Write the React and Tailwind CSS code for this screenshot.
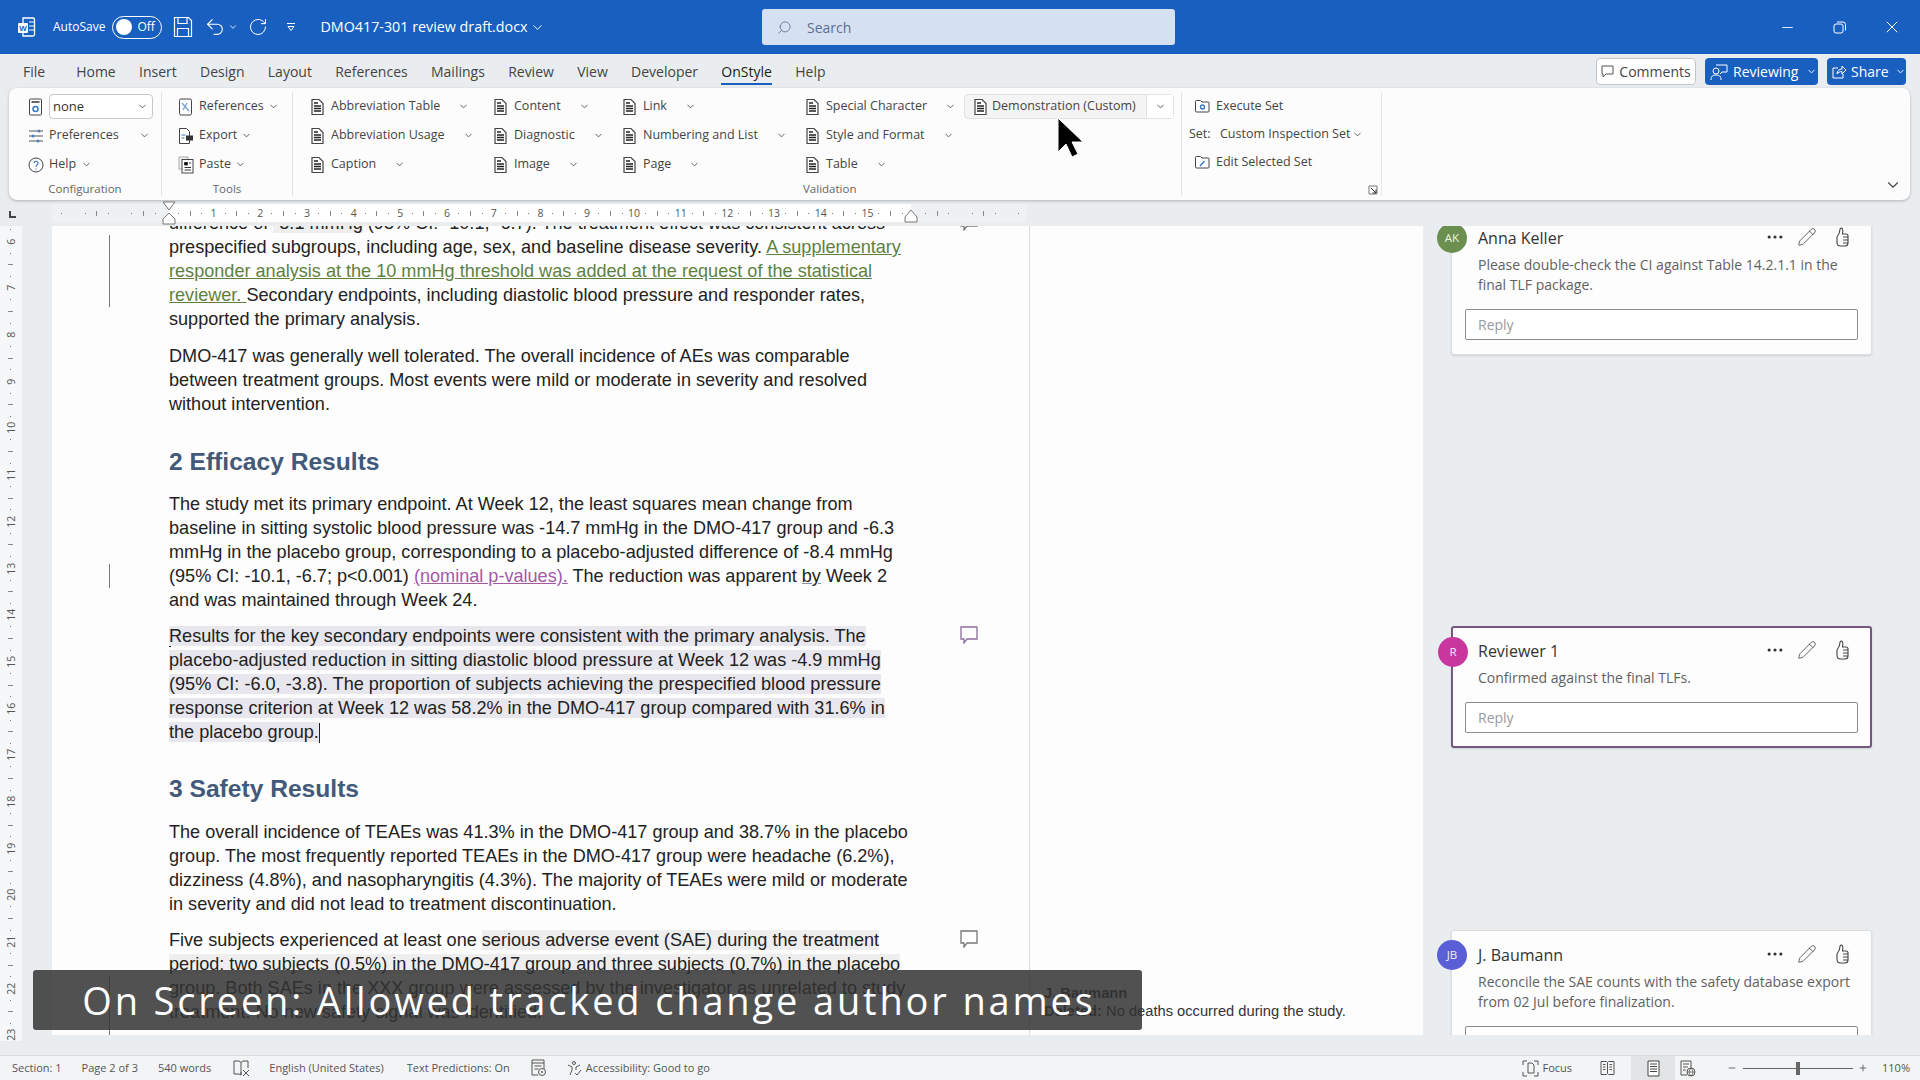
import { ChevronDown, Ellipsis, Minus, Pencil, Plus, RotateCw, Search, Undo2, X } from "lucide-react";

const Chev = ({ className = "" }) => (
  <ChevronDown size={11} strokeWidth={2} className={`text-[#555] shrink-0 ${className}`} />
);

const DocIcon = () => (
  <svg width="15" height="18" viewBox="0 0 15 18" className="shrink-0">
    <path d="M2 1.500h7l4 4v11H2z" fill="#fff" stroke="#444" strokeWidth="1.200" />
    <path d="M4 5h4M4 8h7M4 10.500h7M4 13h7" stroke="#222" strokeWidth="1.300" />
  </svg>
);

const SliderIcon = () => (
  <svg width="16" height="16" viewBox="0 0 16 16" className="shrink-0">
    <path d="M1 3h14M1 8h14M1 13h14" stroke="#555" strokeWidth="1" />
    <circle cx="11" cy="3" r="1.500" fill="#4a7fc0" />
    <circle cx="5" cy="8" r="1.500" fill="#4a7fc0" />
    <circle cx="10" cy="13" r="1.500" fill="#4a7fc0" />
  </svg>
);

const HelpIcon = () => (
  <svg width="16" height="16" viewBox="0 0 16 16" className="shrink-0">
    <circle cx="8" cy="8" r="7" fill="#fff" stroke="#444" />
    <path d="M6 6.200a2 2 0 1 1 3 1.800c-.7.400-1 .8-1 1.700M8 11.500v1" fill="none" stroke="#3b78c4" strokeWidth="1.200" />
  </svg>
);

const FolderIcon = ({ mark }) => (
  <svg width="17" height="16" viewBox="0 0 17 16" className="shrink-0">
    <path d="M1.500 3.500a1 1 0 0 1 1-1h4l1.500 1.500h6a1 1 0 0 1 1 1v8a1 1 0 0 1-1 1h-11.500a1 1 0 0 1-1-1z" fill="#fff" stroke="#444" />
    {mark === "gear" ? (
      <circle cx="8.500" cy="9" r="2" fill="none" stroke="#3b78c4" strokeWidth="1.400" />
    ) : (
      <path d="M6 12l4.500-5" stroke="#3b78c4" strokeWidth="1.400" />
    )}
  </svg>
);

const ConfigIcon = () => (
  <svg width="15" height="18" viewBox="0 0 15 18" className="shrink-0">
    <rect x="1.500" y="1" width="12" height="16" rx="1" fill="#fff" stroke="#444" />
    <path d="M3.500 4h8" stroke="#333" strokeWidth="1.500" />
    <circle cx="7.500" cy="11" r="2.500" fill="none" stroke="#3b78c4" strokeWidth="1.500" />
  </svg>
);

const RefIcon = () => (
  <svg width="15" height="18" viewBox="0 0 15 18" className="shrink-0">
    <rect x="1.500" y="1" width="12" height="16" rx="1.500" fill="#fff" stroke="#444" />
    <path d="M4 5l7 8M5 12l4-7" stroke="#7fa6d6" strokeWidth="1.500" />
  </svg>
);

const ExportIcon = () => (
  <svg width="17" height="18" viewBox="0 0 17 18" className="shrink-0">
    <path d="M1.500 1.500h7l3 3v12h-10z" fill="#fff" stroke="#444" />
    <path d="M3.500 8h4M3.500 11h3" stroke="#3b78c4" />
    <rect x="8" y="8.500" width="7" height="5" fill="#333" />
  </svg>
);

const PasteIcon = () => (
  <svg width="17" height="18" viewBox="0 0 17 18" className="shrink-0">
    <rect x="1" y="1" width="9" height="12" fill="#eef0f3" stroke="#aaa" />
    <rect x="4" y="3.500" width="11" height="13.500" fill="#fff" stroke="#444" />
    <path d="M6.500 6.500h3v2.500h-3zM11 7h2M6.500 11.500h6.500M6.500 14h6.500" stroke="#333" />
  </svg>
);

const ThumbIcon = () => (
  <svg width="18" height="20" viewBox="0 0 18 20" className="text-[#444] shrink-0">
    <path
      d="M5 10c1.500-2 3-4.500 3-7.500C8 1.300 9 .8 10 1.300c1.200.8.800 3.700.5 5.700H14c1.200 0 2 .8 2 2v7c0 2-1.300 3-3 3H8.500C6.500 19 5 17.500 5 15.500z"
      fill="none"
      stroke="currentColor"
      strokeWidth="1.100"
    />
    <path d="M11 10h5M11 13h5M11 16h5" stroke="currentColor" strokeWidth="1" />
  </svg>
);

function Item({ icon, label, gap = "ml-[18px]" }) {
  return (
    <div className="h-[29px] flex items-center">
      <span className="w-[21px] flex items-center shrink-0">{icon}</span>
      <span className="text-[12.500px] text-[#444] whitespace-nowrap">{label}</span>
      <Chev className={gap} />
    </div>
  );
}

function Validation({ width, items }) {
  return (
    <div className={`flex flex-col ${width}`}>
      {items.map((label) => (
        <Item key={label} icon={<DocIcon />} label={label} />
      ))}
    </div>
  );
}

function Ribbon() {
  return (
    <div className="relative h-[112px] ml-[9px] w-[1901px] rounded-lg bg-[#fcfcfc] shadow-[0_1px_3px_rgba(0,0,0,0.25)] flex pt-[4px] shrink-0">
      <div className="w-[153px] h-[104px] border-r border-[#e2e2e2] flex flex-col">
        <div className="pl-[19px] h-[87px]">
          <div className="h-[29px] flex items-center">
            <span className="w-[21px] shrink-0"><ConfigIcon /></span>
            <div className="w-[104px] h-[25px] border border-[#c8c8c8] rounded flex items-center justify-between px-[3px] bg-white">
              <span className="text-[13px] text-[#333]">none</span>
              <Chev className="mr-[1px]" />
            </div>
          </div>
          <Item icon={<SliderIcon />} label="Preferences" gap="ml-[20px]" />
          <Item icon={<HelpIcon />} label="Help" gap="ml-[5px]" />
        </div>
        <div className="text-center text-[11.500px] text-[#666] mt-[1px]">Configuration</div>
      </div>
      <div className="w-[131px] h-[104px] border-r border-[#e2e2e2] flex flex-col">
        <div className="pl-4 h-[87px]">
          <Item icon={<RefIcon />} label="References" gap="ml-[4px]" />
          <Item icon={<ExportIcon />} label="Export" gap="ml-[4px]" />
          <Item icon={<PasteIcon />} label="Paste" gap="ml-[4px]" />
        </div>
        <div className="text-center text-[11.500px] text-[#666] mt-[1px]">Tools</div>
      </div>
      <div className="w-[889px] h-[104px] border-r border-[#e2e2e2] flex flex-col">
        <div className="pl-[17px] h-[87px] flex">
          <Validation width="w-[183px]" items={["Abbreviation Table", "Abbreviation Usage", "Caption"]} />
          <Validation width="w-[129px]" items={["Content", "Diagnostic", "Image"]} />
          <Validation width="w-[183px]" items={["Link", "Numbering and List", "Page"]} />
          <Validation width="w-[159px]" items={["Special Character", "Style and Format", "Table"]} />
          <div className="h-[25px] w-[210px] mt-[2px] border border-[#e2e2e2] rounded bg-[#f4f4f4] flex items-center">
            <div className="flex-1 flex items-center pl-[8px] gap-[4px] border-r border-[#e2e2e2] h-full">
              <DocIcon />
              <span className="text-[12.500px] text-[#444] whitespace-nowrap">Demonstration (Custom)</span>
            </div>
            <span className="w-[26px] flex justify-center bg-white h-full items-center"><Chev /></span>
          </div>
        </div>
        <div className="ml-[510px] text-[11.500px] text-[#666] mt-[1px]">Validation</div>
      </div>
      <div className="w-[200px] h-[104px] border-r border-[#e8e8e8] pl-[7px] text-[12.500px] text-[#444]">
        <div className="h-[28px] flex items-center gap-[5px] pl-[5px]"><FolderIcon mark="gear" />Execute Set</div>
        <div className="h-[28px] flex items-center">
          <span className="w-[31px]">Set:</span>
          <span className="whitespace-nowrap">Custom Inspection Set</span>
          <Chev className="ml-[2px]" />
        </div>
        <div className="h-[28px] flex items-center gap-[5px] pl-[5px]"><FolderIcon />Edit Selected Set</div>
        <svg width="10" height="10" viewBox="0 0 10 10" className="absolute left-[1359px] top-[97px]">
          <path d="M1 1h8v8H1z" fill="none" stroke="#777" />
          <path d="M3 3l5 5M8 4.500v3.500h-3.500" stroke="#333" fill="none" />
        </svg>
      </div>
      <ChevronDown size={18} strokeWidth={1.500} className="absolute right-[8px] bottom-[6px] text-[#444]" />
    </div>
  );
}

function TitleBar() {
  return (
    <div className="h-[54px] bg-[#185fc0] flex items-center text-white relative shrink-0">
      <svg width="20" height="22" viewBox="0 0 20 22" className="ml-[17px]">
        <path d="M6 2h10a1.500 1.500 0 0 1 1.500 1.500v15a1.500 1.500 0 0 1-1.500 1.500H6z" fill="none" stroke="#fff" strokeWidth="1.300" />
        <path d="M12 6h5M12 10h5M12 14h5" stroke="#fff" />
        <rect x="1" y="7" width="10" height="10" rx="1" fill="#fff" />
        <text x="6" y="15" textAnchor="middle" fontSize="8" fontWeight="bold" fill="#185fc0" fontFamily="Liberation Sans">W</text>
      </svg>
      <span className="ml-[16px] text-[12px]">AutoSave</span>
      <div className="ml-[7px] w-[50px] h-[23px] rounded-full border border-white flex items-center pl-[3px] gap-[5px]">
        <span className="w-[16px] h-[16px] rounded-full bg-white" />
        <span className="text-[12px]">Off</span>
      </div>
      <svg width="20" height="22" viewBox="0 0 20 22" className="ml-[11px]">
        <path d="M1.500 1.500h14l3 3v16h-17z" fill="none" stroke="#fff" strokeWidth="1.200" />
        <path d="M5 1.500v6h9v-6M4.500 20.500v-8h11v8" fill="none" stroke="#fff" strokeWidth="1.200" />
      </svg>
      <Undo2 size={22} strokeWidth={1.200} className="ml-[11px]" />
      <ChevronDown size={10} strokeWidth={2} className="ml-[2px]" />
      <RotateCw size={20} strokeWidth={1.200} className="ml-[10px]" />
      <svg width="10" height="10" viewBox="0 0 10 10" className="ml-[18px]">
        <path d="M1 1.500h8M2 4.500h6l-3 4z" fill="none" stroke="#fff" />
      </svg>
      <span className="ml-[24px] text-[14.300px] whitespace-nowrap">DMO417-301 review draft.docx</span>
      <ChevronDown size={15} strokeWidth={1.500} className="ml-[3px]" />
      <div className="absolute left-[762px] top-[9px] w-[413px] h-[36px] rounded-[3px] bg-[#d5e1f2] flex items-center text-[#5d6f8a]">
        <Search size={15} strokeWidth={1.300} className="ml-[15px] -scale-x-100" />
        <span className="ml-[15px] text-[14px]">Search</span>
      </div>
      <div className="ml-auto flex items-center">
        <Minus size={17} strokeWidth={1.200} className="mr-[37px]" />
        <svg width="13" height="13" viewBox="0 0 13 13" className="mr-[36px]">
          <rect x="1" y="3" width="9" height="9" rx="2" fill="none" stroke="#fff" />
          <path d="M4 1h6a2.500 2.500 0 0 1 2.500 2.500v6" fill="none" stroke="#fff" />
        </svg>
        <X size={20} strokeWidth={1.200} className="mr-[18px]" />
      </div>
    </div>
  );
}

function Tabs() {
  const tabs = ["Home", "Insert", "Design", "Layout", "References", "Mailings", "Review", "View", "Developer"];
  return (
    <div className="h-[34px] flex items-center relative shrink-0 text-[14px] text-[#444]">
      <span className="ml-[23px] mr-[31px]">File</span>
      <div className="flex items-center gap-[23.300px]">
        {tabs.map((t) => (
          <span key={t}>{t}</span>
        ))}
        <span className="relative text-[#222]">
          OnStyle
          <span className="absolute left-0 right-0 -bottom-[3px] h-[2px] bg-[#185fc0]" />
        </span>
        <span>Help</span>
      </div>
      <div className="ml-auto flex items-center mr-[14px] h-[27px] mt-[1px] text-[14px]">
        <div className="w-[100px] h-full rounded border border-[#c4c4c4] bg-white flex items-center justify-center gap-[5px]">
          <svg width="13" height="13" viewBox="0 0 13 13">
            <path d="M1 1h11v8H5l-3 3V9H1z" fill="none" stroke="#555" />
          </svg>
          Comments
        </div>
        <div className="ml-[9px] w-[113px] h-full rounded bg-[#185fc0] text-white flex items-center pl-[5px]">
          <svg width="18" height="18" viewBox="0 0 18 18">
            <circle cx="6" cy="8" r="3" fill="none" stroke="#fff" />
            <path d="M1 17c0-4 2-5 5-5s5 1 5 5M6 2h11v7h-5l-2 2" fill="none" stroke="#fff" />
          </svg>
          <span className="ml-[5px]">Reviewing</span>
          <ChevronDown size={11} strokeWidth={2} className="ml-[8px]" />
        </div>
        <div className="ml-[9px] w-[79px] h-full rounded bg-[#185fc0] text-white flex items-center pl-[5px]">
          <svg width="14" height="14" viewBox="0 0 14 14">
            <path d="M6 3H1v10h10V9M5 9c0-3 2-5 5-5V1l4 4-4 4V6.500c-2 0-4 1-5 2.500z" fill="none" stroke="#fff" />
          </svg>
          <span className="ml-[5px]">Share</span>
          <ChevronDown size={11} strokeWidth={2} className="ml-[6px]" />
        </div>
      </div>
    </div>
  );
}

function RulerCell({ n }) {
  const label = n >= 1 && n <= 15 ? n : "";
  return (
    <div className="w-[46.700px] shrink-0 flex items-center text-[10.500px] text-[#555]">
      <span className="w-[11.700px] text-center leading-none">{label}</span>
      <span className="w-[11.700px] flex justify-center"><span className="w-[1px] h-[1px] bg-[#777]" /></span>
      <span className="w-[11.700px] flex justify-center"><span className="w-[1px] h-[5px] bg-[#888]" /></span>
      <span className="w-[11.700px] flex justify-center"><span className="w-[1px] h-[1px] bg-[#777]" /></span>
    </div>
  );
}

function TopRuler() {
  const cells = [];
  for (let n = -3; n <= 18; n++) cells.push(n);
  return (
    <div className="h-[26px] flex shrink-0 pt-[4px] relative">
      <svg width="7" height="7" viewBox="0 0 7 7" className="absolute left-[9px] top-[11px]">
        <path d="M1 0v6h6" fill="none" stroke="#444" strokeWidth="2" />
      </svg>
      <div className="ml-[52px] w-[975px] h-[18px] bg-[#eef0f2] overflow-hidden relative">
        <div className="absolute left-[117px] top-0 w-[742px] h-full bg-white" />
        <div className="flex h-full -ml-[31px] relative">
          {cells.map((n) => (
            <RulerCell key={n} n={n} />
          ))}
        </div>
      </div>
      <svg width="14" height="24" viewBox="0 0 14 24" className="absolute left-[162px] top-[1px]">
        <path d="M1 1h12L7 9z" fill="#fff" stroke="#777" />
        <path d="M7 12l6 6v5H1v-5z" fill="#fff" stroke="#777" />
      </svg>
      <svg width="14" height="14" viewBox="0 0 14 14" className="absolute left-[904px] top-[9px]">
        <path d="M7 1l6 7v5H1V8z" fill="#fff" stroke="#777" />
      </svg>
    </div>
  );
}

function SideRuler() {
  const cells = [];
  for (let n = 5; n <= 23; n++) cells.push(n);
  return (
    <div className="w-[22px] h-[815px] bg-[#f6f7f8] overflow-hidden shrink-0">
      <div className="-mt-[37px] flex flex-col items-center text-[10.500px] text-[#555]">
        {cells.map((n) => (
          <div key={n} className="h-[46.700px] shrink-0 flex flex-col items-center">
            <span className="h-[11.700px] flex items-center justify-center -rotate-90 leading-none whitespace-nowrap">{n}</span>
            <span className="h-[11.700px] flex items-center"><span className="w-[1px] h-[1px] bg-[#777]" /></span>
            <span className="h-[11.700px] flex items-center"><span className="w-[5px] h-[1px] bg-[#888]" /></span>
            <span className="h-[11.700px] flex items-center"><span className="w-[1px] h-[1px] bg-[#777]" /></span>
          </div>
        ))}
      </div>
    </div>
  );
}

const NoteIcon = ({ stroke }) => (
  <svg width="18" height="18" viewBox="0 0 18 18" className="absolute left-[791px] top-[2px]">
    <path d="M1 1h16v12H7l-3 4v-4H1z" fill="#fff" stroke={stroke} strokeWidth="1.300" />
  </svg>
);

function Line({ bar, note, children }) {
  return (
    <div className="relative h-[24px] leading-[24px] whitespace-nowrap">
      {bar && <span className="absolute -left-[60px] top-0 w-[1px] h-full bg-[#777]" />}
      {note && <NoteIcon stroke={note} />}
      {children}
    </div>
  );
}

const Mark = ({ children }) => <span className="bg-[#e8e7ed]">{children}</span>;
const Grey = ({ children }) => <span className="bg-[#eeeeee]">{children}</span>;
const Added = ({ children }) => (
  <span className="text-[#5f8140] underline decoration-[#5f8140]">{children}</span>
);
const Caret = () => <span className="inline-block w-[1.500px] h-[20px] -mr-[1.500px] bg-[#222] align-[-5px]" />;

const Heading = ({ className, children }) => (
  <h2 className={`h-[32px] leading-[32px] text-[24.600px] font-bold text-[#42597a] ${className}`}>{children}</h2>
);

function Page() {
  return (
    <div className="w-[978px] h-full bg-[#fdfdfd] border-r border-[#dcdcdc] overflow-hidden shrink-0 pl-[117px] font-['Liberation_Sans',sans-serif] text-[18.100px] text-[#222]">
      <div className="-mt-[15px]">
        <Line note="#777777">
          difference of <Grey>-8.1 mmHg</Grey> (95% CI: -10.1, -6.7). The treatment effect was consistent across
        </Line>
        <Line bar>
          prespecified subgroups, including age, sex, and baseline disease severity. <Added>A supplementary</Added>
        </Line>
        <Line bar>
          <Added>responder analysis at the 10 mmHg threshold was added at the request of the statistical</Added>
        </Line>
        <Line bar>
          <Added>reviewer. </Added>Secondary endpoints, including diastolic blood pressure and responder rates,
        </Line>
        <Line>supported the primary analysis.</Line>
        <div className="mt-[13px]">
          <Line>DMO-417 was generally well tolerated. The overall incidence of AEs was comparable</Line>
          <Line>between treatment groups. Most events were mild or moderate in severity and resolved</Line>
          <Line>without intervention.</Line>
        </div>
        <Heading className="mt-[30px] mb-[14px]">2 Efficacy Results</Heading>
        <Line>The study met its primary endpoint. At Week 12, the least squares mean change from</Line>
        <Line>baseline in sitting systolic blood pressure was -14.7 mmHg in the DMO-417 group and -6.3</Line>
        <Line>mmHg in the placebo group, corresponding to a placebo-adjusted difference of -8.4 mmHg</Line>
        <Line bar>
          (95% CI: -10.1, -6.7; p&lt;0.001){" "}
          <span className="text-[#a55aa8] underline decoration-[#a55aa8]">(nominal p-values).</span> The reduction was
          apparent <span className="underline decoration-[#8a8fb0]">by</span> Week 2
        </Line>
        <Line>and was maintained through Week 24.</Line>
        <div className="mt-[12px]">
          <Line note="#8d6f9c">
            <Caret />
            <Mark>Results for the key secondary endpoints were consistent with the primary analysis. The</Mark>
          </Line>
          <Line><Mark>placebo-adjusted reduction in sitting diastolic blood pressure at Week 12 was -4.9 mmHg</Mark></Line>
          <Line><Mark>(95% CI: -6.0, -3.8). The proportion of subjects achieving the prespecified blood pressure</Mark></Line>
          <Line><Mark>response criterion at Week 12 was 58.2% in the DMO-417 group compared with 31.6% in</Mark></Line>
          <Line>
            <Mark>the placebo group.</Mark>
            <Caret />
          </Line>
        </div>
        <Heading className="mt-[29px] mb-[15px]">3 Safety Results</Heading>
        <Line>The overall incidence of TEAEs was 41.3% in the DMO-417 group and 38.7% in the placebo</Line>
        <Line>group. The most frequently reported TEAEs in the DMO-417 group were headache (6.2%),</Line>
        <Line>dizziness (4.8%), and nasopharyngitis (4.3%). The majority of TEAEs were mild or moderate</Line>
        <Line>in severity and did not lead to treatment discontinuation.</Line>
        <div className="mt-[12px]">
          <Line note="#777777">
            Five subjects experienced at least one <Grey>serious adverse event (SAE) during the treatment</Grey>
          </Line>
          <Line><Grey>period: two subjects (0.5%) in the DMO-417 group and three subjects (0.7%) in the placebo</Grey></Line>
          <Line bar>group. Both SAEs in the XXX group were assessed by the investigator as unrelated to study</Line>
          <Line bar>treatment. No new safety signal was identified.</Line>
          <Line bar />
        </div>
      </div>
    </div>
  );
}

function Card({ avatar, initials, name, lines, active, className }) {
  const box = active
    ? "border-2 border-[#74587f] pl-[25px] pr-[12px] pt-[12px] pb-[13px]"
    : "border border-[#dcdee0] pl-[26px] pr-[13px] pt-[13px] pb-[14px]";
  return (
    <div className={`relative w-[421px] shrink-0 rounded-[3px] bg-[#fdfdfd] shadow-[0_1px_2px_rgba(0,0,0,0.12)] ${box} ${className}`}>
      <span className={`absolute -left-[15px] top-[9px] w-[30px] h-[30px] rounded-full flex items-center justify-center text-[11.500px] text-[#eef2ea] ${avatar}`}>
        {initials}
      </span>
      <div className="h-[22px] flex items-center">
        <span className="text-[16px] text-[#333]">{name}</span>
        <Ellipsis size={20} strokeWidth={1.800} className="ml-auto text-[#333] -mt-[3px]" />
        <Pencil size={20} strokeWidth={1} className="ml-[12px] text-[#444] -mt-[3px]" />
        <span className="ml-[15px] mr-[8px] -mt-[3px]"><ThumbIcon /></span>
      </div>
      <div className="mt-[6px] text-[14px] leading-[20px] text-[#616161] whitespace-nowrap">
        {lines.map((l) => (
          <div key={l}>{l}</div>
        ))}
      </div>
      <div className="mt-[14px] -ml-[13px] h-[31px] border border-[#8c8c8c] rounded-[2px] bg-white flex items-center pl-[12px] text-[14px] text-[#9a9a9a]">
        Reply
      </div>
    </div>
  );
}

const S = "#555";

const SpellIcon = () => (
  <svg width="17" height="18" viewBox="0 0 17 18" className="shrink-0">
    <path d="M1 2h5l2 1.500V16L6 15H1zM8 3.500L10 2h5v7M8 16v-3" fill="none" stroke={S} />
    <path d="M10 11l6 6M16 11l-6 6" stroke={S} />
  </svg>
);

const MacroIcon = () => (
  <svg width="16" height="18" viewBox="0 0 16 18" className="shrink-0">
    <path d="M1 1h12v9M1 1v15h6M1 4h12" fill="none" stroke={S} />
    <path d="M3.500 7h7M3.500 10h4" stroke={S} />
    <circle cx="11" cy="13" r="3.500" fill="none" stroke={S} />
    <circle cx="11" cy="13" r="1" fill={S} />
  </svg>
);

const ReadIcon = () => (
  <svg width="15" height="16" viewBox="0 0 15 16" className="shrink-0">
    <path d="M1 1.500h5.500l1 1 1-1H14v13H8.500l-1-1-1 1H1zM7.500 2.500v11" fill="none" stroke={S} />
    <path d="M3 4.500h2.500M3 7h2.500M3 9.500h2.500M9.500 4.500H12M9.500 7H12M9.500 9.500H12" stroke={S} />
  </svg>
);

const PrintIcon = () => (
  <svg width="13" height="17" viewBox="0 0 13 17" className="shrink-0">
    <path d="M1 1h11v15H1z" fill="#fff" stroke="#444" />
    <path d="M3 4h7M3 6.500h7M3 9h7M3 11.500h7" stroke="#444" />
  </svg>
);

const WebIcon = () => (
  <svg width="16" height="17" viewBox="0 0 16 17" className="shrink-0">
    <path d="M1 1h10v8M1 1v14h6M3 4h6M3 7h5M3 10h3" fill="none" stroke={S} />
    <circle cx="11" cy="12" r="4" fill="#fff" stroke={S} />
    <path d="M7 12h8M11 8c-2.500 2.500-2.500 5.500 0 8M11 8c2.500 2.500 2.500 5.500 0 8" fill="none" stroke={S} strokeWidth=".8" />
  </svg>
);

function StatusBar() {
  return (
    <div className="h-[25px] shrink-0 bg-[#f3f4f5] border-t border-[#d8dadc] flex items-center text-[11px] text-[#555] whitespace-nowrap relative">
      <span className="ml-[12px]">Section: 1</span>
      <span className="ml-[20px]">Page 2 of 3</span>
      <span className="ml-[20px]">540 words</span>
      <span className="ml-[22px]"><SpellIcon /></span>
      <span className="ml-[19px]">English (United States)</span>
      <span className="ml-[23px]">Text Predictions: On</span>
      <span className="ml-[21px]"><MacroIcon /></span>
      <svg width="16" height="16" viewBox="0 0 16 16" className="ml-[19px]">
        <circle cx="8" cy="3" r="1.500" fill="none" stroke={S} />
        <path d="M2 5l4 2v3l-2 5M14 5l-4 2v3M9 13l2 2 4-5" fill="none" stroke={S} />
      </svg>
      <span className="ml-[4px]">Accessibility: Good to go</span>
      <div className="ml-auto flex items-center h-full">
        <svg width="17" height="17" viewBox="0 0 17 17">
          <path d="M1 5V1h4M12 1h4v4M1 12v4h4M16 12v4h-4M6 3h4l2 2v8H6z" fill="none" stroke={S} />
        </svg>
        <span className="ml-[3px]">Focus</span>
        <span className="ml-[28px]"><ReadIcon /></span>
        <div className="ml-[16px] w-[44px] h-full bg-[#e3e4e5] flex items-center justify-center">
          <PrintIcon />
        </div>
        <span className="ml-[5px]"><WebIcon /></span>
        <Minus size={10} className="ml-[31px]" />
        <div className="ml-[6px] w-[110px] h-[1px] bg-[#666] relative">
          <span className="absolute left-[53px] -top-[6px] w-[4px] h-[13px] bg-[#666]" />
        </div>
        <Plus size={10} className="ml-[5px]" />
        <span className="ml-[14px] mr-[10px]">110%</span>
      </div>
    </div>
  );
}

export default function App() {
  return (
    <div className="relative w-[1920px] h-[1080px] overflow-hidden flex flex-col bg-[#e9edf0] font-['Open_Sans',sans-serif]">
      <TitleBar />
      <Tabs />
      <Ribbon />
      <TopRuler />
      <div className="flex h-[809px] shrink-0">
        <SideRuler />
        <div className="w-[30px] shrink-0" />
        <Page />
        <div className="w-[393px] h-full bg-[#fdfdfd] shrink-0 flex flex-col justify-end pl-[14px] pb-[15px] text-[14.700px] font-['Liberation_Sans',sans-serif] text-[#333]">
          <div className="font-bold leading-[18px]">J. Baumann</div>
          <div className="leading-[18px] whitespace-nowrap">
            <span className="font-bold">Deleted:</span> No deaths occurred during the study.
          </div>
        </div>
        <div className="flex-1 h-full overflow-hidden pl-[28px] flex flex-col">
          <Card
            avatar="bg-[#6a8f4e]"
            initials="AK"
            name="Anna Keller"
            lines={["Please double-check the CI against Table 14.2.1.1 in the", "final TLF package."]}
            className="-mt-[13px]"
          />
          <Card
            active
            avatar="bg-[#c8379e]"
            initials="R"
            name="Reviewer 1"
            lines={["Confirmed against the final TLFs."]}
            className="mt-[271px]"
          />
          <Card
            avatar="bg-[#5b5fd6]"
            initials="JB"
            name="J. Baumann"
            lines={["Reconcile the SAE counts with the safety database export", "from 02 Jul before finalization."]}
            className="mt-[182px]"
          />
        </div>
      </div>
      <div className="h-[20px] shrink-0" />
      <StatusBar />

      <div className="absolute left-[33px] top-[970px] w-[1109px] h-[60px] pl-[3px] rounded-[3px] bg-[#333333]/85 flex items-center justify-center text-[38px] tracking-[0.075em] text-white whitespace-nowrap">
        On Screen: Allowed tracked change author names
      </div>
      <svg width="30" height="42" viewBox="0 0 30 42" className="absolute left-[1056px] top-[117px]">
        <path d="M2 1v34l8-8 6 13 6-3-6-12h11z" fill="#000" stroke="#fff" strokeWidth="1" />
      </svg>
    </div>
  );
}
